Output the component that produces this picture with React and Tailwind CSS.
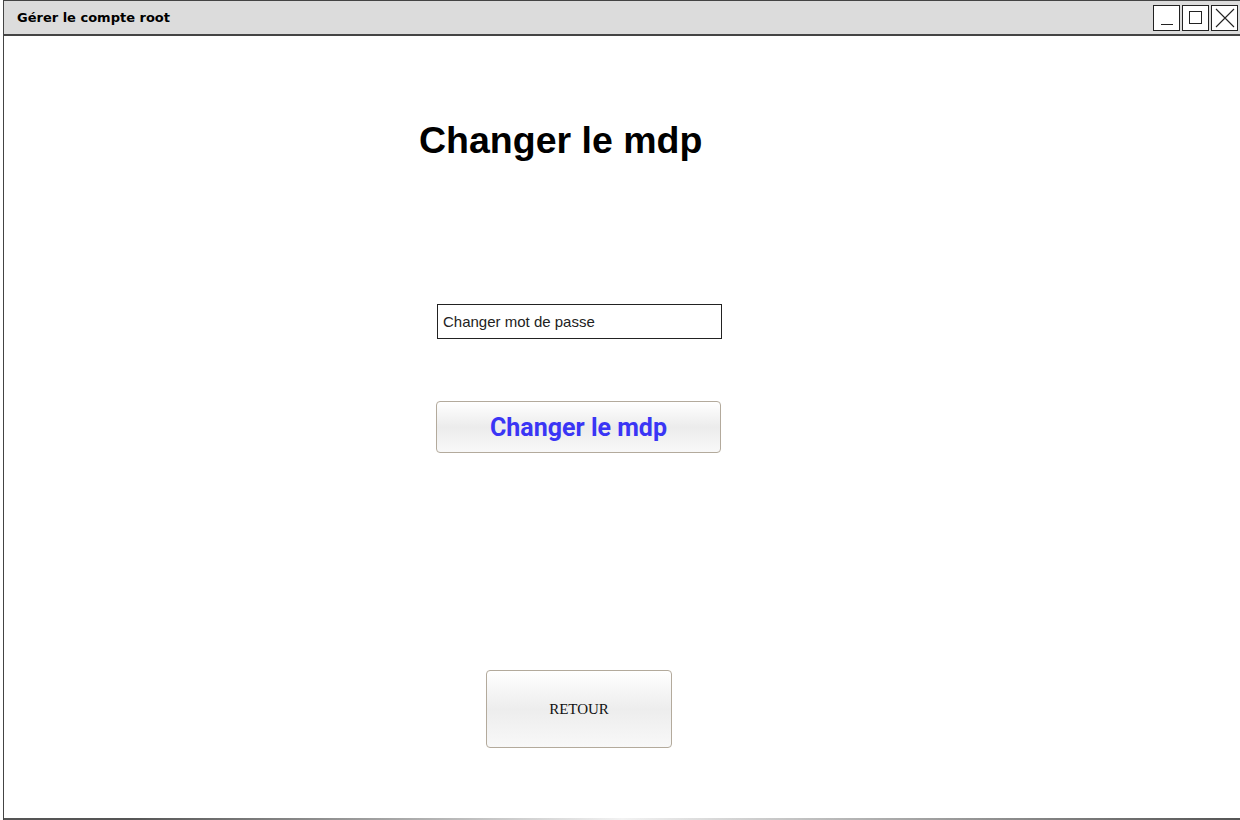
export default function App() {
  return (
    <div className="w-[1240px] h-[820px] bg-white overflow-hidden">
      <div className="ml-[3px] h-[820px] flex flex-col border-l border-[#444] border-t border-t-[#444]">
        <div className="h-[35px] shrink-0 flex items-center bg-[#dcdcdc] border-b-2 border-[#444] pl-[13px] pr-[2px]">
          <span className="flex-1 text-[13px] font-bold text-black pt-[1px] font-['Comic_Sans_MS','DejaVu_Sans',sans-serif]">
            Gérer le compte root
          </span>
          <div className="flex gap-[2px]">
            <div className="w-[27px] h-[26px] bg-white border border-[#222] flex items-end justify-center pb-[5px]">
              <div className="w-[12px] h-px bg-[#222]" />
            </div>
            <div className="w-[27px] h-[26px] bg-white border border-[#222] flex items-center justify-center">
              <div className="w-[13px] h-[13px] border border-[#222]" />
            </div>
            <div className="w-[27px] h-[26px] bg-white border border-[#222] flex items-center justify-center">
              <svg width="20" height="20" viewBox="0 0 20 20" fill="none" stroke="#222" strokeWidth="1.1">
                <path d="M1 1 L19 19 M19 1 L1 19" />
              </svg>
            </div>
          </div>
        </div>

        <div className="flex-1 flex flex-col">
          <h1 className="mt-[86px] ml-[415px] text-[37.5px] leading-none font-bold text-black font-['Liberation_Sans',Arial,sans-serif]">
            Changer le mdp
          </h1>

          <div className="mt-[144px] ml-[433px] w-[285px] h-[35px] border border-[#222] flex items-center pl-[5px] pt-[2px] text-[15px] text-[#222] font-['Comic_Sans_MS','Liberation_Sans',sans-serif]">
            Changer mot de passe
          </div>

          <button className="mt-[62px] ml-[432px] w-[285px] h-[52px] pt-[3px] rounded-[4px] border border-[#b3aa9c] bg-linear-to-b from-white via-[#ececec] to-[#f8f8f8] text-[25px] font-bold text-[#3a35f5] font-['Roboto',sans-serif]">
            Changer le mdp
          </button>

          <button className="mt-[217px] ml-[482px] w-[186px] h-[78px] pt-[2px] rounded-[4px] border border-[#b3aa9c] bg-linear-to-b from-white via-[#ededed] to-[#f8f8f8] text-[15px] text-[#111] font-['Liberation_Serif',serif]">
            RETOUR
          </button>

          <div className="flex-1" />
          <div className="h-[2px] bg-linear-to-r from-[#555] from-10% via-[#f2f2f2] via-50% to-[#555] to-100%" />
        </div>
      </div>
    </div>
  )
}
